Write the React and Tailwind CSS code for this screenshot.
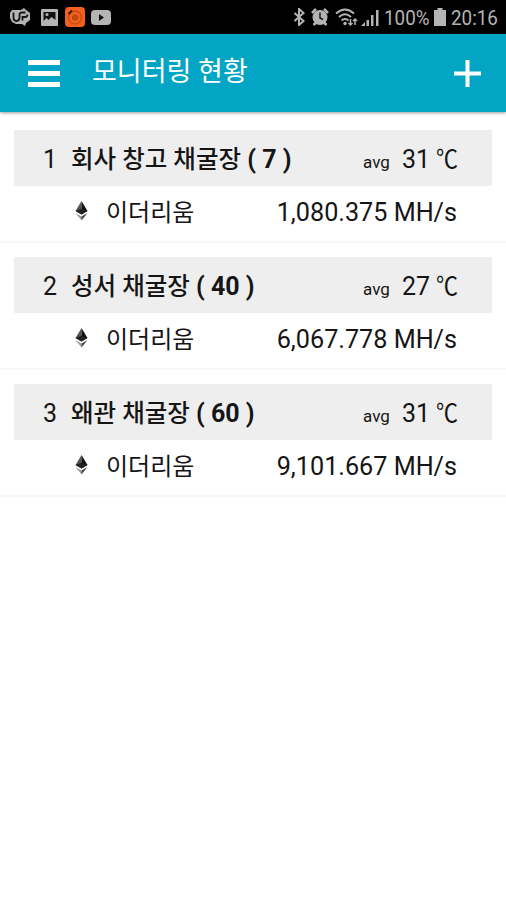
const farms = [
  { id: 1, name: "회사 창고 채굴장", count: 7, temp: 31, rate: "1,080.375" },
  { id: 2, name: "성서 채굴장", count: 40, temp: 27, rate: "6,067.778" },
  { id: 3, name: "왜관 채굴장", count: 60, temp: 31, rate: "9,101.667" },
];

function StatusBar() {
  return (
    <div className="flex h-[34px] items-center justify-between bg-black pl-[10px] pr-2 text-[#b4b4b4]">
      <div className="flex items-center">
        <svg width="21" height="19" viewBox="0 0 21 19">
          <path d="M2 2h9l3-2 2 2 4 3v7l-4 3-1 3-3-2H6l-4-2-2-4V5z" fill="#b4b4b4" />
          <path
            d="M3.500 4.500v5q0 3.500 3 3.500t3-3.500v-3q0-2 2.500-2h3.500M12.500 12.500V9H15q2.500 0 2.500-2.500"
            fill="none"
            stroke="#151515"
            strokeWidth="1.800"
          />
        </svg>
        <svg width="17" height="17" viewBox="0 0 17 17" className="ml-[10px]">
          <rect width="17" height="17" rx="1" fill="#b4b4b4" />
          <path d="M2.500 3h12v8l-4-3-3 3-2-2-3 3z" fill="#111" />
          <circle cx="6" cy="5.500" r="1.500" fill="#b4b4b4" />
        </svg>
        <svg width="20" height="20" viewBox="0 0 20 20" className="ml-[7px]">
          <rect width="20" height="20" rx="4" fill="#f2601c" />
          <circle cx="10" cy="10.500" r="6.500" fill="none" stroke="#c24d14" strokeWidth="1.300" />
          <circle cx="10" cy="10.500" r="2.500" fill="#c24d14" stroke="#a8400f" />
          <path d="M3.500 7l3.500-3.500" stroke="#3a1a0c" strokeWidth="1.800" />
        </svg>
        <svg width="20" height="15" viewBox="0 0 20 15" className="ml-[6px]">
          <rect width="20" height="15" rx="4" fill="#b4b4b4" />
          <path d="M8 4l5 3.500L8 11z" fill="#111" />
        </svg>
      </div>

      <div className="flex items-center font-['Roboto',sans-serif] text-[20px]">
        <svg width="12" height="18" viewBox="0 0 12 18" fill="none" stroke="currentColor" strokeWidth="2">
          <path d="M1.500 5l9 8L6 17V1l4.500 4-9 8" />
        </svg>
        <svg width="18" height="18" viewBox="0 0 18 18" className="ml-[6px]">
          <path d="M1 5l4-4M17 5l-4-4M2.500 17l3-3M15.500 17l-3-3" stroke="currentColor" strokeWidth="2.500" />
          <circle cx="9" cy="9.500" r="7.500" fill="currentColor" />
          <path d="M9 4.500v5.500l3 1.500" fill="none" stroke="#111" strokeWidth="1.400" />
        </svg>
        <svg width="24" height="19" viewBox="0 0 24 19" fill="none" stroke="currentColor" strokeWidth="2" className="ml-[6px]">
          <path d="M1 5.500q9-8 18 0M4 9q6-5.500 12 0M6.500 12.500q3.500-3 7 0" />
          <circle cx="10" cy="15.500" r="1.700" fill="currentColor" stroke="none" />
          <path d="M15.500 11v6M13.500 15l2 2 2-2M20 17v-6M18 13l2-2 2 2" strokeWidth="1.500" />
        </svg>
        <svg width="18" height="17" viewBox="0 0 18 17" fill="currentColor" className="ml-[2px]">
          <path d="M0 17l4-4v4zM5.500 11H8v6H5.500zM10 6h2.500v11H10zM15 1h2.500v16H15z" />
        </svg>
        <span className="ml-[5px] w-[47px] origin-left translate-y-px scale-x-[0.94] whitespace-nowrap">100%</span>
        <svg width="12" height="18" viewBox="0 0 12 18" fill="currentColor" className="ml-[3px]">
          <path d="M3.500 0h5v2H12v16H0V2h3.500z" />
        </svg>
        <span className="ml-[5px] w-[47px] origin-left translate-y-px scale-x-[0.94] whitespace-nowrap">20:16</span>
      </div>
    </div>
  );
}

function Header() {
  return (
    <header className="flex h-[78px] items-center bg-[#02a6c4] pl-7 pr-[25px] text-white shadow-[0_1px_3px_rgba(0,0,0,0.4)]">
      <button className="flex w-8 flex-col gap-[6px]">
        <span className="h-[5px] bg-white" />
        <span className="h-[5px] bg-white" />
        <span className="h-[5px] bg-white" />
      </button>
      <h1 className="mb-[3px] ml-8 flex-1 font-['Roboto','Noto_Sans_CJK_KR',sans-serif] text-[27px] leading-8">
        모니터링 현황
      </h1>
      <svg width="27" height="27" viewBox="0 0 27 27" stroke="currentColor" strokeWidth="4">
        <path d="M13.500 0v27M0 13.500h27" />
      </svg>
    </header>
  );
}

function EthereumIcon() {
  return (
    <svg width="13" height="20" viewBox="0 0 13 20" className="mb-[3px]">
      <path d="M6.500 0L0.500 10l6 3.500z" fill="#555" />
      <path d="M6.500 0l6 10-6 3.500z" fill="#111" />
      <path d="M0.500 10l6-2.500 6 2.500-6 3.500z" fill="#222" />
      <path d="M0.500 12l6 3.500V19.500z" fill="#999" />
      <path d="M12.500 12l-6 3.500V19.500z" fill="#444" />
    </svg>
  );
}

function FarmItem({ farm }) {
  return (
    <li className="h-[127px] px-[14px] pt-4 shadow-[0_2px_0_#f7f7f7]">
      <div className="flex h-14 items-center bg-[#eeeeee] pl-[29px] pr-[35px] pt-1">
        <span className="w-7">{farm.id}</span>
        <span className="flex-1 whitespace-nowrap font-bold">
          <span className="text-[24.500px] font-medium">{farm.name}</span> ( {farm.count} )
        </span>
        <span className="mr-3 mt-[3px] text-[17px]">avg</span>
        <span className="flex">
          {farm.temp}
          <span className="ml-[6px] w-[21px] origin-left scale-x-[0.88]">℃</span>
        </span>
      </div>
      <div className="flex h-[53px] items-center pl-[61px] pr-[35px]">
        <EthereumIcon />
        <span className="ml-[18px] flex-1 text-[24px]">이더리움</span>
        <span className="text-[25.200px]">{farm.rate} MH/s</span>
      </div>
    </li>
  );
}

export default function App() {
  return (
    <div className="h-[900px] overflow-hidden bg-white font-['Roboto','Noto_Sans_CJK_KR',sans-serif] text-[25px] leading-8 text-[#151515]">
      <StatusBar />
      <Header />
      <ul className="pt-[2px]">
        {farms.map((farm) => (
          <FarmItem key={farm.id} farm={farm} />
        ))}
      </ul>
    </div>
  );
}
